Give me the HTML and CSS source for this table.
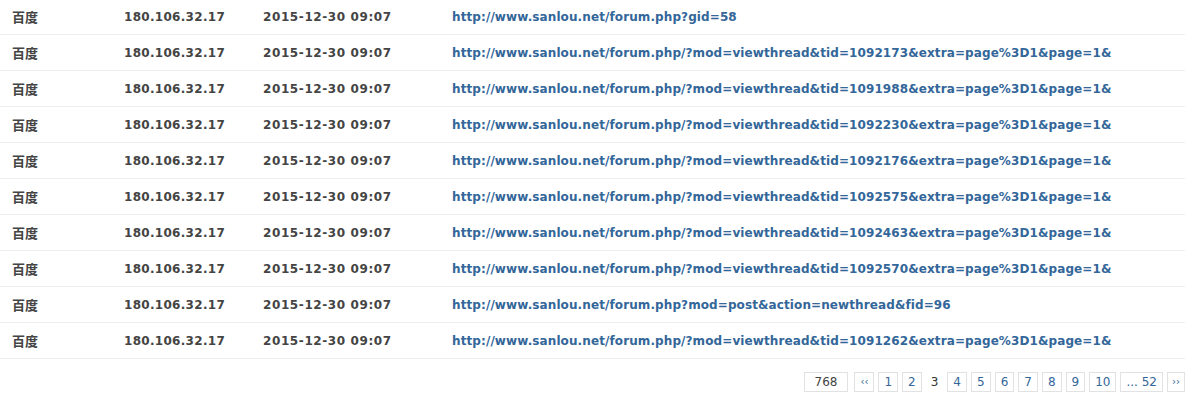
FILE: index.html
```html
<!DOCTYPE html>
<html lang="zh-CN">
<head>
    <meta charset="UTF-8">
    <title>访问记录</title>
    <link rel="stylesheet" href="styles.css">
</head>
<body>
    <table class="log">
        <tbody>
            <tr><td class="src">百度</td><td class="ip">180.106.32.17</td><td class="time">2015-12-30 09:07</td><td class="url"><a href="#">http://www.sanlou.net/forum.php?gid=58</a></td></tr>
            <tr><td class="src">百度</td><td class="ip">180.106.32.17</td><td class="time">2015-12-30 09:07</td><td class="url"><a href="#">http://www.sanlou.net/forum.php/?mod=viewthread&amp;tid=1092173&amp;extra=page%3D1&amp;page=1&amp;</a></td></tr>
            <tr><td class="src">百度</td><td class="ip">180.106.32.17</td><td class="time">2015-12-30 09:07</td><td class="url"><a href="#">http://www.sanlou.net/forum.php/?mod=viewthread&amp;tid=1091988&amp;extra=page%3D1&amp;page=1&amp;</a></td></tr>
            <tr><td class="src">百度</td><td class="ip">180.106.32.17</td><td class="time">2015-12-30 09:07</td><td class="url"><a href="#">http://www.sanlou.net/forum.php/?mod=viewthread&amp;tid=1092230&amp;extra=page%3D1&amp;page=1&amp;</a></td></tr>
            <tr><td class="src">百度</td><td class="ip">180.106.32.17</td><td class="time">2015-12-30 09:07</td><td class="url"><a href="#">http://www.sanlou.net/forum.php/?mod=viewthread&amp;tid=1092176&amp;extra=page%3D1&amp;page=1&amp;</a></td></tr>
            <tr><td class="src">百度</td><td class="ip">180.106.32.17</td><td class="time">2015-12-30 09:07</td><td class="url"><a href="#">http://www.sanlou.net/forum.php/?mod=viewthread&amp;tid=1092575&amp;extra=page%3D1&amp;page=1&amp;</a></td></tr>
            <tr><td class="src">百度</td><td class="ip">180.106.32.17</td><td class="time">2015-12-30 09:07</td><td class="url"><a href="#">http://www.sanlou.net/forum.php/?mod=viewthread&amp;tid=1092463&amp;extra=page%3D1&amp;page=1&amp;</a></td></tr>
            <tr><td class="src">百度</td><td class="ip">180.106.32.17</td><td class="time">2015-12-30 09:07</td><td class="url"><a href="#">http://www.sanlou.net/forum.php/?mod=viewthread&amp;tid=1092570&amp;extra=page%3D1&amp;page=1&amp;</a></td></tr>
            <tr><td class="src">百度</td><td class="ip">180.106.32.17</td><td class="time">2015-12-30 09:07</td><td class="url"><a href="#">http://www.sanlou.net/forum.php?mod=post&amp;action=newthread&amp;fid=96</a></td></tr>
            <tr><td class="src">百度</td><td class="ip">180.106.32.17</td><td class="time">2015-12-30 09:07</td><td class="url"><a href="#">http://www.sanlou.net/forum.php/?mod=viewthread&amp;tid=1091262&amp;extra=page%3D1&amp;page=1&amp;</a></td></tr>
        </tbody>
    </table>

    <div class="pg">
        <span class="total">768</span>
        <a href="#" class="prev">&lsaquo;&lsaquo;</a>
        <a href="#">1</a>
        <a href="#">2</a>
        <strong>3</strong>
        <a href="#">4</a>
        <a href="#">5</a>
        <a href="#">6</a>
        <a href="#">7</a>
        <a href="#">8</a>
        <a href="#">9</a>
        <a href="#">10</a>
        <a href="#">... 52</a>
        <a href="#" class="next">&rsaquo;&rsaquo;</a>
    </div>
</body>
</html>
```

FILE: styles.css
```css
body {
    margin: 0;
    background: #FFFFFF;
    color: #444444;
    font-family: "DejaVu Sans", Verdana, "Noto Sans CJK SC", sans-serif;
    font-size: 12px;
}
.log {
    width: 100%;
    border-collapse: collapse;
    margin-top: -1px;
}
.log td {
    height: 35px;
    padding: 0 0 0 12px;
    border-bottom: 1px solid #EEEEEE;
    font-weight: bold;
    white-space: nowrap;
    vertical-align: middle;
}
.log .src {
    width: 100px;
    font-family: "Noto Sans CJK SC", sans-serif;
    font-size: 13px;
}
.log .ip {
    width: 127px;
    letter-spacing: 0.3px;
}
.log .time {
    width: 177px;
    letter-spacing: 0.6px;
}
.log .url a {
    color: #336699;
    letter-spacing: 0.1px;
    text-decoration: none;
}
.pg {
    display: flex;
    justify-content: flex-end;
    align-items: center;
    gap: 4px;
    margin-top: 13px;
    line-height: 18px;
}
.pg a,
.pg .total,
.pg strong {
    height: 18px;
    padding: 0 5px;
    border: 1px solid #E2E2E2;
    color: #336699;
    text-decoration: none;
}
.pg .total {
    padding: 0 10px;
    margin-right: 2px;
    color: #444444;
}
.pg strong {
    border-color: transparent;
    color: #333333;
    font-weight: normal;
    padding: 0 4px;
}
.pg .prev,
.pg .next {
    font-size: 10px;
}
.pg .next {
    padding: 0 4px;
}
```
